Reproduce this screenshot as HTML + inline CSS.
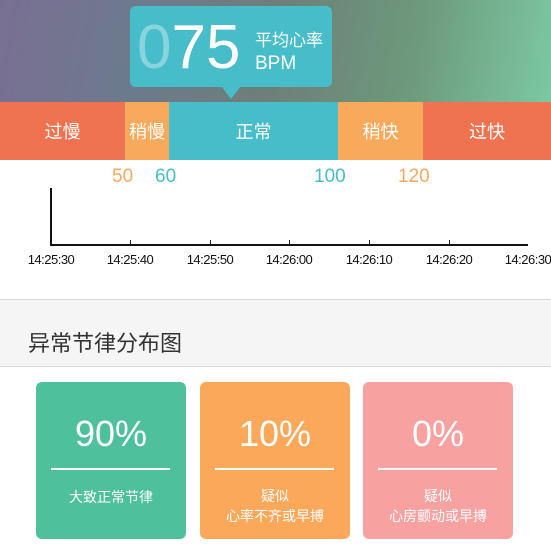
<!DOCTYPE html>
<html><head><meta charset="utf-8"><style>
*{margin:0;padding:0;box-sizing:border-box}
body{width:551px;height:544px;overflow:hidden;background:#fff;font-family:"Liberation Sans","Noto Sans CJK SC",sans-serif;position:relative}
.abs{position:absolute}
.hdr{left:0;top:0;width:551px;height:102px;background:linear-gradient(100deg,#7a6f92 0%,#6c7a8e 25%,#6d7f78 50%,#6d9a7c 75%,#7cc8a4 100%)}
.bub{left:130px;top:6px;width:202px;height:81px;background:#47bdc9;border-radius:6px}
.tri{left:221px;top:86px;width:0;height:0;border-left:10px solid transparent;border-right:10px solid transparent;border-top:13px solid #47bdc9}
.seg{top:102px;height:58px;color:#fff;font-size:18px;display:flex;align-items:center;justify-content:center}
.num{top:166px;font-size:19px}
.tk{top:240px;width:1px;height:5px;background:#222}
.lb{top:252px;font-size:13px;width:60px;text-align:center;color:#111;letter-spacing:-0.5px}
.card{top:382px;width:150px;height:157px;border-radius:6px;color:#fff;text-align:center}
.card .p{position:absolute;top:31px;left:0;width:100%;font-size:36px}
.card .l{position:absolute;top:86px;left:15px;width:119px;height:2px;background:#fff}
.card .t{position:absolute;top:104px;left:0;width:100%;font-size:14px;line-height:20px}
</style></head><body>
<div class="abs hdr"></div>
<div class="abs bub"></div>
<div class="abs tri"></div>
<div class="abs" style="left:137px;top:14px;font-size:62px;line-height:68px;color:#fff"><span style="color:rgba(255,255,255,.35)">0</span>75</div>
<div class="abs" style="left:255px;top:26px;font-size:17px;color:#fff">平均心率</div>
<div class="abs" style="left:255px;top:53px;font-size:19px;color:#fff">BPM</div>
<div class="abs seg" style="left:0;width:125px;background:#ef7350">过慢</div>
<div class="abs seg" style="left:125px;width:44px;background:#f9a95b">稍慢</div>
<div class="abs seg" style="left:169px;width:169px;background:#47bdc9">正常</div>
<div class="abs seg" style="left:338px;width:85px;background:#f9a95b">稍快</div>
<div class="abs seg" style="left:423px;width:128px;background:#ef7350">过快</div>
<div class="abs num" style="left:112px;color:#f9a95b">50</div>
<div class="abs num" style="left:155px;color:#47bdc9">60</div>
<div class="abs num" style="left:314px;color:#47bdc9">100</div>
<div class="abs num" style="left:398px;color:#f9a95b">120</div>
<div class="abs" style="left:50px;top:188px;width:2px;height:58px;background:#111"></div>
<div class="abs" style="left:50px;top:244px;width:478px;height:2px;background:#111"></div>
<div class="abs tk" style="left:130px"></div><div class="abs tk" style="left:210px"></div><div class="abs tk" style="left:289px"></div><div class="abs tk" style="left:369px"></div><div class="abs tk" style="left:449px"></div>
<div class="abs lb" style="left:21px">14:25:30</div>
<div class="abs lb" style="left:100px">14:25:40</div>
<div class="abs lb" style="left:180px">14:25:50</div>
<div class="abs lb" style="left:259px">14:26:00</div>
<div class="abs lb" style="left:339px">14:26:10</div>
<div class="abs lb" style="left:419px">14:26:20</div>
<div class="abs lb" style="left:498px">14:26:30</div>
<div class="abs" style="left:0;top:299px;width:551px;height:68px;background:#f5f5f5;border-top:1px solid #d8d8d8;border-bottom:1px solid #d8d8d8"></div>
<div class="abs" style="left:28px;top:326px;font-size:22px;color:#333">异常节律分布图</div>
<div class="abs card" style="left:36px;background:#4fc09c"><div class="p">90%</div><div class="l"></div><div class="t" style="top:105px">大致正常节律</div></div>
<div class="abs card" style="left:200px;background:#fba85a"><div class="p">10%</div><div class="l"></div><div class="t">疑似<br>心率不齐或早搏</div></div>
<div class="abs card" style="left:363px;background:#f7a1a0"><div class="p">0%</div><div class="l"></div><div class="t">疑似<br>心房颤动或早搏</div></div>
</body></html>
